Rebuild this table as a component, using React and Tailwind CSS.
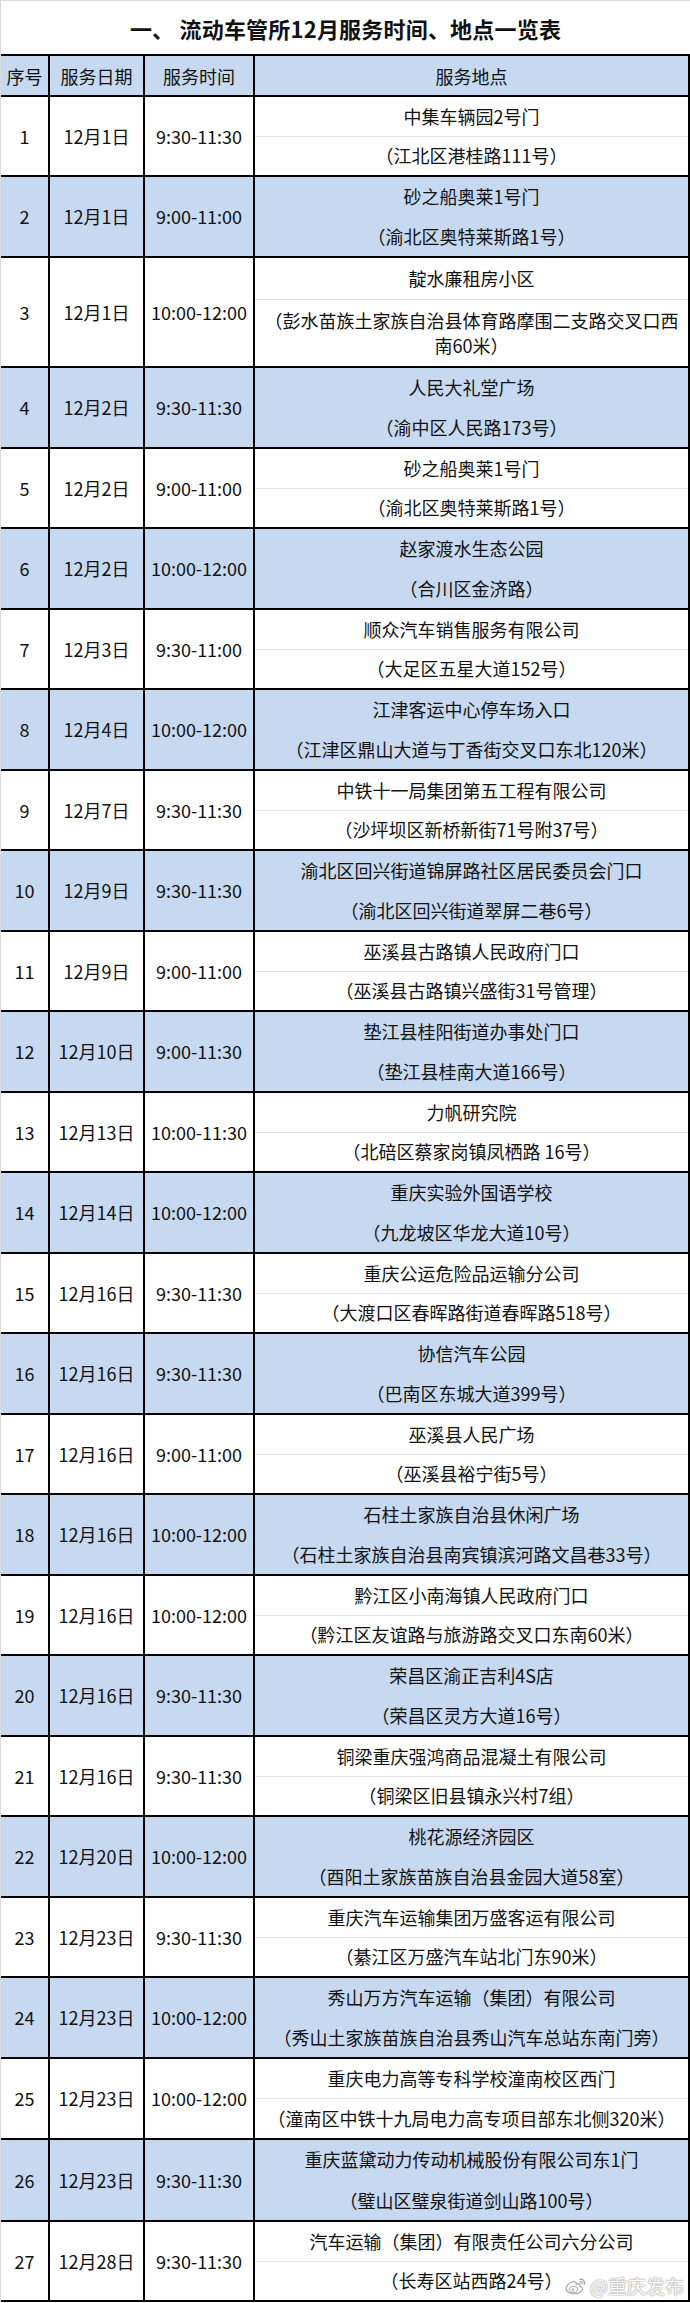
import React from "react"

const rows = [
  ["1", "12月1日", "9:30-11:30", "中集车辆园2号门", "（江北区港桂路111号）"],
  ["2", "12月1日", "9:00-11:00", "砂之船奥莱1号门", "（渝北区奥特莱斯路1号）"],
  ["3", "12月1日", "10:00-12:00", "靛水廉租房小区", "（彭水苗族土家族自治县体育路摩围二支路交叉口西\n南60米）"],
  ["4", "12月2日", "9:30-11:30", "人民大礼堂广场", "（渝中区人民路173号）"],
  ["5", "12月2日", "9:00-11:00", "砂之船奥莱1号门", "（渝北区奥特莱斯路1号）"],
  ["6", "12月2日", "10:00-12:00", "赵家渡水生态公园", "（合川区金济路）"],
  ["7", "12月3日", "9:30-11:00", "顺众汽车销售服务有限公司", "（大足区五星大道152号）"],
  ["8", "12月4日", "10:00-12:00", "江津客运中心停车场入口", "（江津区鼎山大道与丁香街交叉口东北120米）"],
  ["9", "12月7日", "9:30-11:30", "中铁十一局集团第五工程有限公司", "（沙坪坝区新桥新街71号附37号）"],
  ["10", "12月9日", "9:30-11:30", "渝北区回兴街道锦屏路社区居民委员会门口", "（渝北区回兴街道翠屏二巷6号）"],
  ["11", "12月9日", "9:00-11:00", "巫溪县古路镇人民政府门口", "（巫溪县古路镇兴盛街31号管理）"],
  ["12", "12月10日", "9:00-11:30", "垫江县桂阳街道办事处门口", "（垫江县桂南大道166号）"],
  ["13", "12月13日", "10:00-11:30", "力帆研究院", "（北碚区蔡家岗镇凤栖路 16号）"],
  ["14", "12月14日", "10:00-12:00", "重庆实验外国语学校", "（九龙坡区华龙大道10号）"],
  ["15", "12月16日", "9:30-11:30", "重庆公运危险品运输分公司", "（大渡口区春晖路街道春晖路518号）"],
  ["16", "12月16日", "9:30-11:30", "协信汽车公园", "（巴南区东城大道399号）"],
  ["17", "12月16日", "9:00-11:00", "巫溪县人民广场", "（巫溪县裕宁街5号）"],
  ["18", "12月16日", "10:00-12:00", "石柱土家族自治县休闲广场", "（石柱土家族自治县南宾镇滨河路文昌巷33号）"],
  ["19", "12月16日", "10:00-12:00", "黔江区小南海镇人民政府门口", "（黔江区友谊路与旅游路交叉口东南60米）"],
  ["20", "12月16日", "9:30-11:30", "荣昌区渝正吉利4S店", "（荣昌区灵方大道16号）"],
  ["21", "12月16日", "9:30-11:30", "铜梁重庆强鸿商品混凝土有限公司", "（铜梁区旧县镇永兴村7组）"],
  ["22", "12月20日", "10:00-12:00", "桃花源经济园区", "（酉阳土家族苗族自治县金园大道58室）"],
  ["23", "12月23日", "9:30-11:30", "重庆汽车运输集团万盛客运有限公司", "（綦江区万盛汽车站北门东90米）"],
  ["24", "12月23日", "10:00-12:00", "秀山万方汽车运输（集团）有限公司", "（秀山土家族苗族自治县秀山汽车总站东南门旁）"],
  ["25", "12月23日", "10:00-12:00", "重庆电力高等专科学校潼南校区西门", "（潼南区中铁十九局电力高专项目部东北侧320米）"],
  ["26", "12月23日", "9:30-11:30", "重庆蓝黛动力传动机械股份有限公司东1门", "（璧山区璧泉街道剑山路100号）"],
  ["27", "12月28日", "9:30-11:30", "汽车运输（集团）有限责任公司六分公司", "（长寿区站西路24号）"],
]

// row heights measured off the screenshot (incl. the 2px bottom rule)
function rowHeight(i) {
  if (i === 1) return "h-[80px]"
  if (i === 2) return "h-[81px]"
  if (i === 3) return "h-[110px]"
  if (i === 25) return "h-[81px]"
  if (i === 26) return "h-[82px]"
  if (i === 27) return "h-[80px]"
  return i % 2 === 0 ? "h-[81px]" : "h-[80px]"
}

function WeiboLogo() {
  return (
    <svg width="22" height="18" viewBox="0 0 22 18" fill="none">
      <path
        d="M8.5 4.5C4.5 5.5 1 8.8 1 11.6 1 14.6 4.8 16.8 9.3 16.8c4.8 0 8.2-2.4 8.2-4.8 0-1.7-1.5-2.4-2.6-2.7.5-1.3.3-2.6-1.3-2.7-1 0-2 .4-2.4.6.3-1.6-.6-3-2.7-2.3Z"
        fill="white"
        stroke="#9a9a9a"
        strokeWidth="1.1"
      />
      <ellipse cx="8.6" cy="12.4" rx="4.2" ry="2.9" fill="white" stroke="#9a9a9a" strokeWidth="1" />
      <circle cx="8" cy="12.6" r="1.2" fill="#aaa" />
      <path d="M15 2.2c2.8-.4 5 2 4.4 4.8" stroke="#9a9a9a" strokeWidth="1.4" strokeLinecap="round" />
      <path d="M15.2 4.6c1.3-.2 2.3.9 2 2.2" stroke="#9a9a9a" strokeWidth="1.2" strokeLinecap="round" />
    </svg>
  )
}

export default function App() {
  return (
    <div className="relative w-[690px] border-t border-l border-[#dadada] bg-white text-[18px] text-[#111] font-['Noto_Sans_CJK_SC','Liberation_Sans',sans-serif]">
      {/* Title */}
      <div className="flex h-[53px] items-center justify-center text-[22px] font-bold leading-none tracking-[0.2px]">
        一、 流动车管所12月服务时间、地点一览表
      </div>

      {/* Header */}
      <div className="grid h-[43px] grid-cols-[49px_95px_110px_1fr] border-y-2 border-black bg-[#c6d9f0] leading-none">
        <div className="flex items-center justify-center border-r-2 border-black">序号</div>
        <div className="flex items-center justify-center border-r-2 border-black">服务日期</div>
        <div className="flex items-center justify-center border-r-2 border-black">服务时间</div>
        <div className="flex items-center justify-center border-r-2 border-black">服务地点</div>
      </div>

      {/* Rows */}
      {rows.map(([no, date, time, place, addr]) => {
        const i = Number(no)
        const blue = i % 2 === 0
        const tall = i === 3
        return (
          <div
            key={no}
            className={`grid grid-cols-[49px_95px_110px_1fr] border-b-2 border-black ${rowHeight(i)} ${blue ? "bg-[#c6d9f0]" : "bg-white"}`}
          >
            <div className="flex items-center justify-center border-r-2 border-black">{no}</div>
            <div className="flex items-center justify-center border-r-2 border-black">{date}</div>
            <div className="flex items-center justify-center border-r-2 border-black">{time}</div>
            <div className="flex flex-col border-r-2 border-black">
              <div
                className={`flex items-center justify-center border-b whitespace-nowrap ${blue ? "border-transparent" : "border-[#e3e3e3]"} ${tall ? "h-[42px]" : "flex-1"}`}
              >
                {place}
              </div>
              <div className="flex flex-1 items-center justify-center whitespace-pre-line text-center leading-[25px]">
                {addr}
              </div>
            </div>
          </div>
        )
      })}

      {/* watermark */}
      <div className="absolute right-[6px] bottom-[7px] flex items-center gap-[3px] opacity-90">
        <WeiboLogo />
        <span className="text-[19px] leading-none text-white [text-shadow:0_0_1px_#777,0_0_2px_#999]">
          @重庆发布
        </span>
      </div>
    </div>
  )
}
